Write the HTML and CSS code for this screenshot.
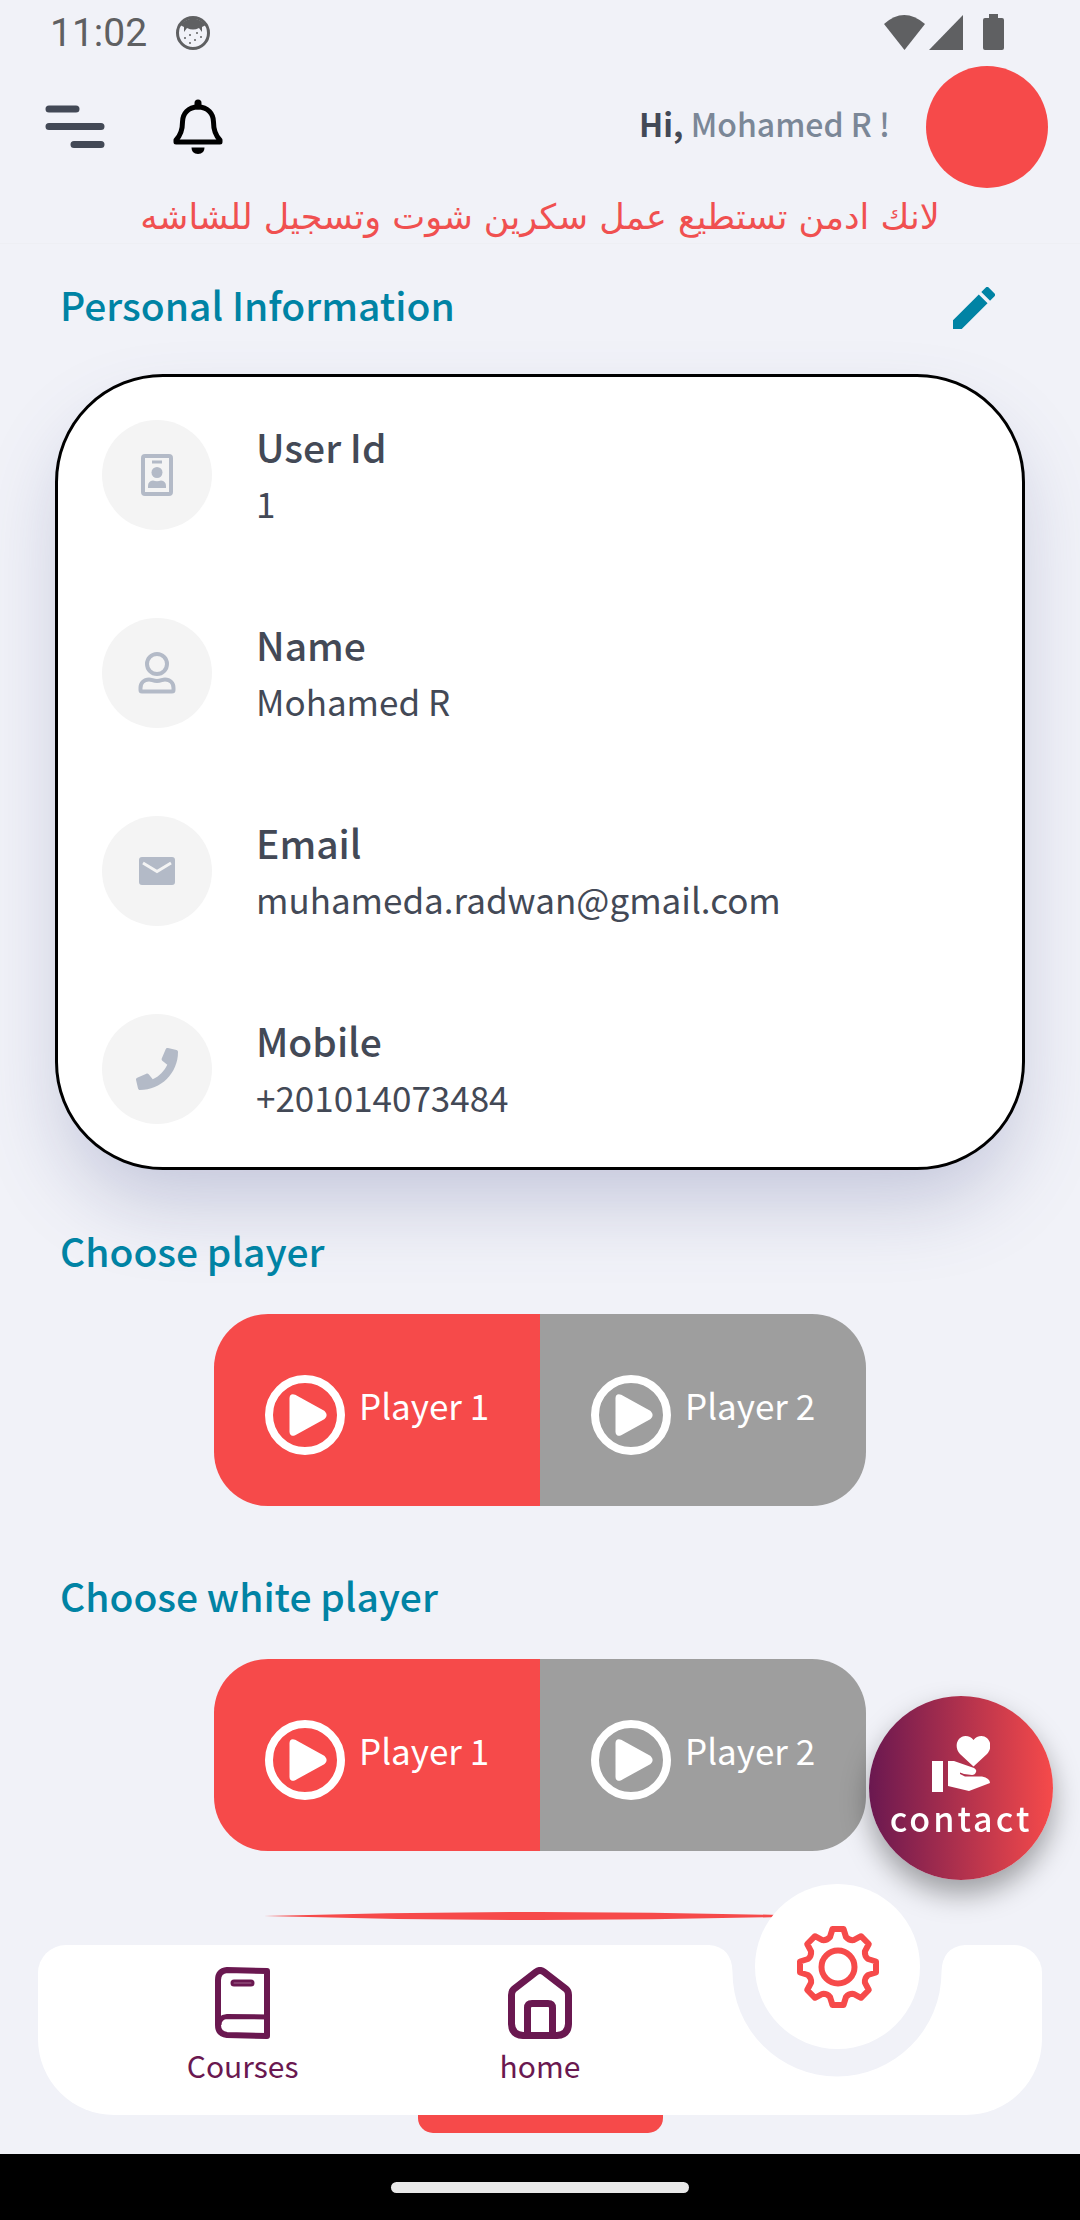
FILE: index.html
```
<!DOCTYPE html>
<html lang="en">
<head>
    <meta charset="UTF-8">
    <meta name="viewport" content="width=device-width, initial-scale=1.0">
    <title>Profile</title>
    <link rel="stylesheet" href="styles.css">
</head>
<body>
    <div class="status-bar">
        <span class="time">11:02</span>
        <svg class="status-face" viewBox="0 0 36 36">
            <circle cx="18" cy="18" r="15.500" fill="none" stroke="#5f6062" stroke-width="3"/>
            <path d="M5 10Q18-3 31 10L27 12L27 17L24 13Q18 16 12 13L9 17L9 12Z" fill="#5f6062"/>
            <g fill="#5f6062">
                <circle cx="10" cy="23" r="1"/><circle cx="15" cy="20" r="1"/><circle cx="22" cy="18" r="1"/>
                <circle cx="20" cy="25" r="1"/><circle cx="26" cy="22" r="1"/><circle cx="15" cy="28" r="1"/>
            </g>
        </svg>
        <svg class="status-icons" viewBox="0 0 120 38">
            <g fill="#5f6062">
                <path d="M0 10Q20-8 41 10L20.500 36Z"/>
                <path d="M45 36L79 1V36Z"/>
                <path d="M105 0h9v4h4q2 0 2 2v28q0 2-2 2h-17q-2 0-2-2V6q0-2 2-2h4z"/>
            </g>
        </svg>
    </div>

    <header class="header">
        <button class="icon-button" aria-label="Menu">
            <svg width="60" height="44" viewBox="0 0 60 44">
                <g stroke="#434956" stroke-width="7" stroke-linecap="round">
                    <path d="M4 4H31M4 21.500H56M29 39.500H56"/>
                </g>
            </svg>
        </button>
        <button class="icon-button" aria-label="Notifications">
            <svg width="50" height="56" viewBox="0 0 50 56">
                <path d="M25 8C15 8 9.500 15 9.500 23C9.500 32 6 38 3 41V43H47V41C44 38 40.500 32 40.500 23C40.500 15 35 8 25 8Z" fill="none" stroke="#000" stroke-width="5" stroke-linejoin="round"/>
                <path d="M25 4V7" stroke="#000" stroke-width="7" stroke-linecap="round"/>
                <path d="M18.500 48.500H31.500Q31.500 55 25 55Q18.500 55 18.500 48.500Z"/>
            </svg>
        </button>
        <p class="greeting"><b>Hi,</b> Mohamed R !</p>
        <div class="avatar"></div>
    </header>
    <p class="notice" lang="ar" dir="rtl">لانك ادمن تستطيع عمل سكرين شوت وتسجيل للشاشه</p>

    <main class="content">
        <div class="section-head">
            <h2>Personal Information</h2>
            <button class="icon-button edit" aria-label="Edit">
                <svg width="42" height="42" viewBox="3 3 18 18">
                    <path fill="#0083a4" d="M3 17.250V21h3.750L17.810 9.940l-3.750-3.750L3 17.250zM20.710 7.040a1 1 0 0 0 0-1.410l-2.340-2.340a1 1 0 0 0-1.410 0l-1.830 1.830 3.750 3.750 1.830-1.830z"/>
                </svg>
            </button>
        </div>

        <ul class="card">
            <li class="row">
                <span class="row-icon">
                    <svg width="32" height="42" viewBox="0 0 32 42">
                        <rect x="2" y="2" width="28" height="38" rx="2" fill="none" stroke="#b3bac7" stroke-width="4"/>
                        <path d="M11 8H21" stroke="#b3bac7" stroke-width="3"/>
                        <circle cx="16" cy="18.500" r="5.500" fill="#b3bac7"/>
                        <path d="M7 34V32Q7 27 12 26.500Q16 28 20 26.500Q25 27 25 32V34Z" fill="#b3bac7"/>
                    </svg>
                </span>
                <div>
                    <h3>User Id</h3>
                    <p>1</p>
                </div>
            </li>
            <li class="row">
                <span class="row-icon">
                    <svg width="38" height="42" viewBox="0 0 38 42">
                        <g fill="none" stroke="#b3bac7" stroke-width="4">
                            <circle cx="19" cy="12" r="10"/>
                            <path d="M11 27.500C14 27.500 15 29 19 29S24 27.500 27 27.500C32 27.500 35.500 31 35.500 36V38Q35.500 39.500 34 39.500H4Q2.500 39.500 2.500 38V36C2.500 31 6 27.500 11 27.500Z"/>
                        </g>
                    </svg>
                </span>
                <div>
                    <h3>Name</h3>
                    <p>Mohamed R</p>
                </div>
            </li>
            <li class="row">
                <span class="row-icon">
                    <svg width="36" height="28" viewBox="0 0 36 28">
                        <rect width="36" height="28" rx="3" fill="#b3bac7"/>
                        <path d="M4 6L18 14.500L32 6" fill="none" stroke="#f4f4f4" stroke-width="3"/>
                    </svg>
                </span>
                <div>
                    <h3>Email</h3>
                    <p>muhameda.radwan@gmail.com</p>
                </div>
            </li>
            <li class="row">
                <span class="row-icon">
                    <svg width="42" height="42" viewBox="0 0 512 512">
                        <path fill="#b3bac7" d="M493.400 24.600l-104-24c-11.300-2.600-22.900 3.300-27.500 13.900l-48 112c-4.200 9.800-1.400 21.300 6.900 28l60.600 49.600c-36 76.700-98.900 140.500-177.200 177.200l-49.600-60.600c-6.800-8.300-18.200-11.100-28-6.900l-112 48C3.900 366.500-2 378.100.6 389.400l24 104C27.100 504.200 36.700 512 48 512c256.100 0 464-207.500 464-464 0-11.200-7.700-20.900-18.600-23.400z"/>
                    </svg>
                </span>
                <div>
                    <h3>Mobile</h3>
                    <p>+201014073484</p>
                </div>
            </li>
        </ul>

        <h2>Choose player</h2>
        <div class="players">
            <button class="player selected">
                <svg width="80" height="80" viewBox="0 0 80 80">
                    <circle cx="40" cy="40" r="36" fill="none" stroke="#fff" stroke-width="8"/>
                    <path d="M27 23V57Q27 59 29 58L58 42Q60 40 58 38L29 22Q27 21 27 23Z" fill="#fff" stroke="#fff" stroke-width="5" stroke-linejoin="round"/>
                </svg>
                Player 1
            </button>
            <button class="player">
                <svg width="80" height="80" viewBox="0 0 80 80">
                    <circle cx="40" cy="40" r="36" fill="none" stroke="#fff" stroke-width="8"/>
                    <path d="M27 23V57Q27 59 29 58L58 42Q60 40 58 38L29 22Q27 21 27 23Z" fill="#fff" stroke="#fff" stroke-width="5" stroke-linejoin="round"/>
                </svg>
                Player 2
            </button>
        </div>

        <h2>Choose white player</h2>
        <div class="players">
            <button class="player selected">
                <svg width="80" height="80" viewBox="0 0 80 80">
                    <circle cx="40" cy="40" r="36" fill="none" stroke="#fff" stroke-width="8"/>
                    <path d="M27 23V57Q27 59 29 58L58 42Q60 40 58 38L29 22Q27 21 27 23Z" fill="#fff" stroke="#fff" stroke-width="5" stroke-linejoin="round"/>
                </svg>
                Player 1
            </button>
            <button class="player">
                <svg width="80" height="80" viewBox="0 0 80 80">
                    <circle cx="40" cy="40" r="36" fill="none" stroke="#fff" stroke-width="8"/>
                    <path d="M27 23V57Q27 59 29 58L58 42Q60 40 58 38L29 22Q27 21 27 23Z" fill="#fff" stroke="#fff" stroke-width="5" stroke-linejoin="round"/>
                </svg>
                Player 2
            </button>
        </div>

        <svg class="divider" viewBox="0 0 552 8" preserveAspectRatio="none">
            <path d="M0 4Q276-4 552 4Q276 12 0 4Z" fill="#f64a4a"/>
        </svg>
    </main>

    <nav class="nav">
        <a class="nav-item" href="#courses">
            <svg width="56" height="72" viewBox="0 0 56 72">
                <g fill="none" stroke="#6a1850" stroke-width="6" stroke-linejoin="round">
                    <path d="M12 3L52 4V69L12 68Q3 67 3 58V13Q3 4 12 3Z"/>
                    <path d="M4 58Q4 50 12 49.500L52 50" stroke-width="5"/>
                </g>
                <rect x="17" y="14" width="21" height="4" rx="2" fill="#a0648c" stroke="#6a1850" stroke-width="3"/>
            </svg>
            Courses
        </a>
        <a class="nav-item" href="#home">
            <svg width="64" height="72" viewBox="0 0 64 72">
                <g fill="none" stroke="#6a1850" stroke-width="7" stroke-linejoin="round">
                    <path d="M28 5Q32 2 36 5L58 22Q60.500 24 60.500 28V57Q60 68 49 68.500H15Q4 68 3.500 57V28Q3.500 24 6 22Z"/>
                    <path d="M19.500 67V41Q19.500 36.500 24 36.500H40Q44.500 36.500 44.500 41V67"/>
                </g>
            </svg>
            home
        </a>
        <div class="nav-item">
            <svg class="notch" width="260" height="132" viewBox="0 0 260 132">
                <path d="M0 0H2Q25 2 25.500 27A104.500 104.500 0 0 0 234.500 27Q235 2 258 0H260Z" fill="#f1f2f8"/>
            </svg>
            <button class="settings" aria-label="Settings">
                <svg width="84" height="84" viewBox="-42 -42 84 84">
                    <g fill="none" stroke="#f64a4a" stroke-width="6" stroke-linejoin="round">
                        <path d="M-5.500-38H5.500L8-30Q11-26.500 15.600-26.900L23-30.800L30.800-23L26.900-15.600Q26.500-11 30-8L38-5.500V5.500L30 8Q26.500 11 26.900 15.600L30.800 23L23 30.800L15.600 26.900Q11 26.500 8 30L5.500 38H-5.500L-8 30Q-11 26.500-15.600 26.900L-23 30.800L-30.800 23L-26.900 15.600Q-26.500 11-30 8L-38 5.500V-5.500L-30-8Q-26.500-11-26.900-15.600L-30.800-23L-23-30.800L-15.600-26.900Q-11-26.500-8-30Z"/>
                        <circle r="16.500"/>
                    </g>
                </svg>
            </button>
        </div>
    </nav>
    <div class="sheet-edge"></div>

    <button class="contact">
        <svg width="58" height="56" viewBox="0 0 58 56">
            <g fill="#fff">
                <path d="M0 25H11V56H0Z"/>
                <path d="M16 25H22L42 32Q45 34 44 36Q43 39 40 39L32 38L28 36.500V38L33 40.500H50Q58 42 58 47L37 55L16 50Z"/>
                <path d="M41.500 30.500L28 18C21 10 26 0 33.500 0Q38.500 0 41.500 4Q44.500 0 49.500 0C57 0 62 10 55 18Z"/>
            </g>
        </svg>
        contact
    </button>

    <div class="system-bar"><span class="home-pill"></span></div>
</body>
</html>
```
FILE: styles.css
```
* {
    box-sizing: border-box;
}

body {
    margin: 0;
    min-height: 100vh;
    display: flex;
    flex-direction: column;
    background-color: #f1f2f8;
    color: #434956;
    font-family: "Noto Sans CJK SC", "Noto Sans", sans-serif;
    font-size: 35px;
}

h2, h3, p, ul {
    margin: 0;
    padding: 0;
}

button {
    padding: 0;
    border: none;
    background: none;
    font: inherit;
    cursor: pointer;
}

svg {
    display: block;
    flex: none;
}

/* status bar */
.status-bar {
    display: flex;
    align-items: center;
    gap: 28px;
    height: 66px;
    padding: 0 76px 0 50px;
    color: #5f6062;
}

.time {
    font-family: Roboto, sans-serif;
    font-size: 39px;
}

.status-face {
    width: 36px;
}

.status-icons {
    width: 120px;
    margin-left: auto;
}

/* header */
.header {
    display: flex;
    align-items: center;
    height: 122px;
    padding: 0 32px 0 45px;
    gap: 68px;
}

.greeting {
    margin-left: auto;
    margin-right: -32px;
    padding-bottom: 8px;
    font-size: 32px;
    line-height: 48px;
    font-weight: 500;
    color: #7b8797;
}

.greeting b {
    color: #434956;
}

.avatar {
    width: 122px;
    height: 122px;
    border-radius: 50%;
    background-color: #f64a4a;
}

.notice {
    height: 56px;
    border-bottom: 1px solid #eeeff4;
    font-family: "DejaVu Sans", sans-serif;
    font-size: 35px;
    line-height: 58px;
    text-align: center;
    color: #f05050;
}

/* content */
.content {
    padding: 32px 55px 25px;
}

.content h2 {
    padding-left: 5px;
    font-size: 39px;
    line-height: 56px;
    font-weight: 500;
    color: #0083a4;
}

.section-head {
    display: flex;
    justify-content: space-between;
    align-items: center;
    padding-right: 30px;
}

.edit {
    padding-top: 7px;
}

.card {
    display: flex;
    flex-direction: column;
    gap: 88px;
    margin: 42px 0 52px;
    padding: 43px 44px;
    border: 3px solid #000;
    border-radius: 108px;
    background-color: #fff;
    box-shadow: 0 40px 80px -10px rgba(75, 80, 140, 0.27);
    list-style: none;
}

.row {
    display: flex;
    align-items: center;
    gap: 44px;
    height: 110px;
}

.row-icon {
    display: flex;
    align-items: center;
    justify-content: center;
    width: 110px;
    height: 110px;
    border-radius: 50%;
    background-color: #f4f4f4;
}

.row h3 {
    font-size: 39px;
    line-height: 56px;
    font-weight: 500;
}

.row p {
    line-height: 58px;
}

.players {
    display: flex;
    width: 652px;
    max-width: 100%;
    margin: 36px auto 61px;
    border-radius: 54px;
    overflow: hidden;
}

.player {
    flex: 1;
    display: flex;
    gap: 14px;
    height: 192px;
    padding: 61px 0 0 51px;
    background-color: #9e9e9e;
    line-height: 60px;
    color: #fff;
}

.player.selected {
    background-color: #f64a4a;
}

.divider {
    width: 552px;
    max-width: 100%;
    height: 8px;
    margin: 0 auto;
}

/* bottom navigation */
.nav {
    display: grid;
    grid-template-columns: repeat(3, 1fr);
    height: 170px;
    margin: 0 38px;
    padding: 0 56px;
    border-radius: 28px 28px 76px 76px;
    background-color: #fff;
}

.nav-item {
    position: relative;
    display: flex;
    flex-direction: column;
    align-items: center;
    gap: 6px;
    padding-top: 22px;
    font-size: 30px;
    line-height: 40px;
    color: #6a1850;
    text-decoration: none;
}

.notch {
    position: absolute;
    top: 0;
    left: calc(50% - 130px);
}

.settings {
    position: absolute;
    top: -61px;
    left: calc(50% - 82px);
    display: flex;
    align-items: center;
    justify-content: center;
    width: 165px;
    height: 165px;
    border-radius: 50%;
    background-color: #fff;
}

.sheet-edge {
    width: 245px;
    height: 18px;
    margin: 0 auto;
    border-radius: 0 0 15px 15px;
    background-color: #f64a4a;
}

/* floating contact button */
.contact {
    position: fixed;
    right: 27px;
    bottom: 340px;
    display: flex;
    flex-direction: column;
    align-items: center;
    width: 184px;
    height: 184px;
    padding-top: 40px;
    border-radius: 50%;
    background: linear-gradient(to right, #6a1850, #f64a4a);
    box-shadow: 0 14px 28px rgba(0, 0, 0, 0.35);
    font-size: 34px;
    font-weight: 500;
    line-height: 52px;
    letter-spacing: 3px;
    color: #fff;
}

.system-bar {
    display: flex;
    align-items: center;
    justify-content: center;
    height: 66px;
    margin-top: auto;
    background-color: #000;
}

.home-pill {
    width: 298px;
    height: 11px;
    border-radius: 6px;
    background-color: #e8e8e8;
}
```
